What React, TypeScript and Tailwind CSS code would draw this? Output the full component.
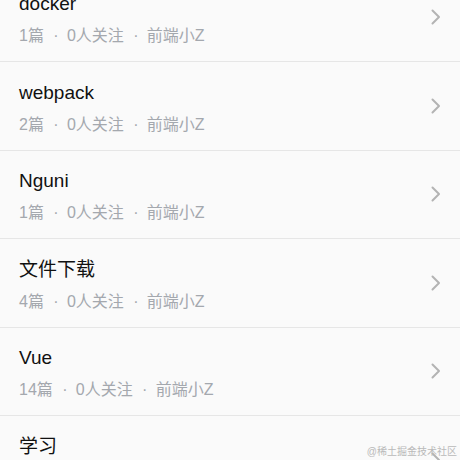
const topics = [
  { name: 'docker', count: 1 },
  { name: 'webpack', count: 2 },
  { name: 'Nguni', count: 1 },
  { name: '文件下载', count: 4 },
  { name: 'Vue', count: 14 },
  { name: '学习', count: 3 },
];

function Chevron() {
  return (
    <svg width="10" height="16" viewBox="0 0 10 16" fill="none" className="shrink-0">
      <polyline
        points="1.5,1.5 8,8 1.5,14.5"
        stroke="#b3b3b3"
        strokeWidth="2"
        strokeLinecap="round"
        strokeLinejoin="round"
      />
    </svg>
  );
}

function Dot() {
  return <span className="inline-block w-[23px] pl-[1px] text-center">·</span>;
}

export default function App() {
  return (
    <div
      className="relative h-[460px] w-[460px] overflow-hidden bg-[#fafafa]"
      style={{ fontFamily: '"Liberation Sans", "Noto Sans CJK SC", sans-serif' }}
    >
      <div className="-mt-[26.5px] flex flex-col">
        {topics.map((topic) => (
          <div
            key={topic.name}
            className="box-border flex h-[88.5px] shrink-0 items-center border-b border-[#e6e6e6] pl-[19px] pr-[19px]"
          >
            <div className="mt-[4px] flex flex-1 flex-col gap-[10px]">
              <div className="text-[19px] leading-[24px] text-[#111]">{topic.name}</div>
              <div className="flex text-[16px] leading-[20px] text-[#a4a8ae]">
                <span>{topic.count}篇</span>
                <Dot />
                <span>0人关注</span>
                <Dot />
                <span>前端小Z</span>
              </div>
            </div>
            <Chevron />
          </div>
        ))}
      </div>
      <div className="absolute bottom-[1px] right-[3px] text-[10px] leading-[14px] text-[#b9b9b9]">
        @稀土掘金技术社区
      </div>
    </div>
  );
}
